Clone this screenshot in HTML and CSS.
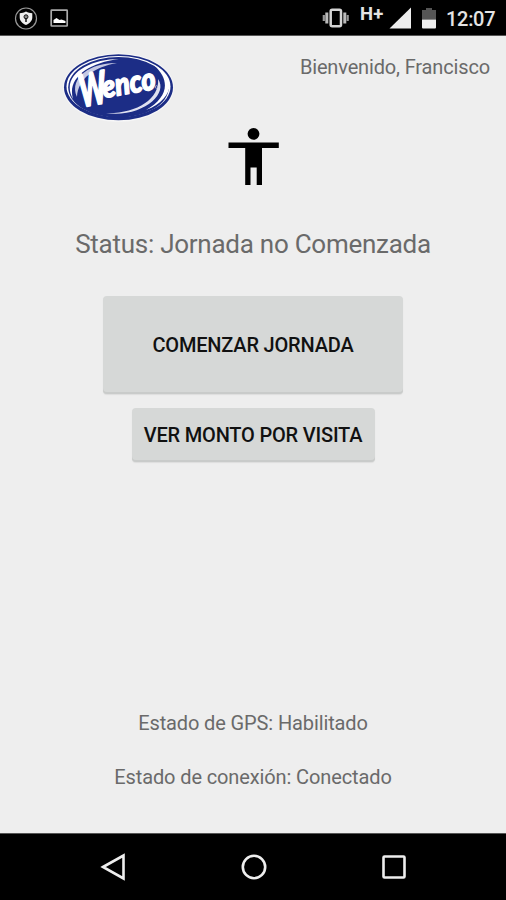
FILE: index.html
```html
<!DOCTYPE html>
<html lang="es">
<head>
<meta charset="utf-8">
<title>Jornada</title>
<link rel="stylesheet" href="styles.css">
</head>
<body>
<div class="screen">
  <header class="statusbar">
    <svg class="notifications" width="76" height="36" viewBox="0 0 76 36">
      <circle cx="26" cy="18.500" r="10.500" fill="none" stroke="#999" stroke-width="1.200"/>
      <path d="M26 11.500c2 1.200 4 1.700 6.300 1.700v4.300c0 3.700-3 6-6.300 7.500-3.300-1.500-6.300-3.800-6.300-7.500v-4.300c2.300 0 4.300-.5 6.300-1.700z" fill="#eee"/>
      <circle cx="26" cy="16.800" r="2" fill="#888" stroke="#111"/>
      <path d="M26 18v4" stroke="#111" stroke-width="1.500"/>
      <rect x="51.200" y="10.200" width="16" height="15.800" rx=".5" fill="none" stroke="#aaa" stroke-width="1.700"/>
      <path d="M53.500 23v-3l3-2 3 2 2-.5 4 1.500v2z" fill="#fff"/>
    </svg>
    <div class="indicators">
      <svg width="28" height="36" viewBox="322 0 28 36">
        <rect x="330.700" y="9.700" width="10.300" height="16.600" rx="1.500" fill="none" stroke="#d5d5d5" stroke-width="2.500"/>
        <path d="M326.800 12.500v11M344.800 12.500v11" stroke="#bbb" stroke-width="3"/>
        <path d="M323.800 15v6M347.700 15v6" stroke="#999" stroke-width="2.200"/>
      </svg>
      <span class="network">H+</span>
      <svg width="55" height="36" viewBox="385 0 55 36">
        <path d="M411 7.500V28.500H389.500z" fill="#eee"/>
        <path d="M422 10h4V8h6v2h4v9.500h-14z" fill="#555"/>
        <path d="M422 19.500h14v8q0 1-1 1h-12q-1 0-1-1z" fill="#eee"/>
      </svg>
      <time class="clock">12:07</time>
    </div>
  </header>
  <main class="content">
    <div class="heading">
      <svg class="logo" width="112" height="70" viewBox="62 52 112 70">
        <ellipse cx="118.500" cy="87.500" rx="55.500" ry="34.300" fill="#f7f7f8"/>
        <ellipse cx="118.500" cy="87.300" rx="54.500" ry="33" fill="#1c2d86"/>
        <ellipse cx="118.500" cy="86.500" rx="52" ry="30.500" fill="#fff"/>
        <ellipse cx="118.500" cy="87.300" rx="50.300" ry="30.300" fill="#1c2d86"/>
        <path d="M73 99C60 76 88 59 119 59C88 63 67 78 73 99z" fill="#fff"/>
        <path d="M154 65C177 77 174 99 146 110C168 97 171 81 154 65z" fill="#fff"/>
        <path d="M77 97C68 76 94 62 117 63C95 67 78 78 77 97z" fill="#c5c9e3"/>
        <path d="M158 79C169 94 142 118 106 113C136 114 160 99 158 79z" fill="#dfe1f0"/>
        <g transform="translate(82 107) rotate(-10)" class="brand">
          <text class="initial" x="0" y="0" textLength="27" lengthAdjust="spacingAndGlyphs">W</text>
          <text class="rest" x="23" y="-5" textLength="54" lengthAdjust="spacingAndGlyphs">enco</text>
        </g>
        <circle cx="156.500" cy="87" r="1.300" fill="none" stroke="#b9bfdc" stroke-width=".8"/>
      </svg>
      <p class="welcome">Bienvenido, Francisco</p>
    </div>
    <svg class="person" width="52" height="60" viewBox="227 127 52 60">
      <circle cx="253.500" cy="133.800" r="5.900"/>
      <path d="M228.500 142.500h50.300v5.500H262v37h-5.300v-17.500h-6.200V185h-5.300v-37h-16.700z"/>
    </svg>
    <h1 class="status">Status: Jornada no Comenzada</h1>
    <button class="button primary">COMENZAR JORNADA</button>
    <button class="button secondary">VER MONTO POR VISITA</button>
    <div class="states">
      <p class="gps">Estado de GPS: Habilitado</p>
      <p class="connection">Estado de conexión: Conectado</p>
    </div>
  </main>
  <nav class="navbar">
    <svg width="28" height="28" viewBox="0 0 28 28"><path d="M3 14 23.500 2.500v23z"/></svg>
    <svg width="28" height="28" viewBox="0 0 28 28"><circle cx="14" cy="14" r="11.200"/></svg>
    <svg width="28" height="28" viewBox="0 0 28 28"><rect x="3.500" y="3.500" width="21" height="21" rx="1"/></svg>
  </nav>
</div>
</body>
</html>
```

FILE: styles.css
```css
* { box-sizing: border-box; }
body { margin: 0; font-family: Roboto, sans-serif; background: #eee; }
p, h1 { margin: 0; font-weight: 400; white-space: nowrap; }
svg { display: block; flex: none; }
.screen { width: 506px; height: 900px; display: flex; flex-direction: column; color: #6a6a6a; }
.statusbar { height: 36px; background: #000; color: #e4e4e4; display: flex; justify-content: space-between; border-bottom: 1px solid #555; }
.indicators { display: flex; width: 184px; }
.network { width: 35px; padding-left: 10px; font-size: 18.5px; font-weight: 700; line-height: 28px; letter-spacing: 0.3px; }
.clock { padding-left: 6px; font-size: 20px; font-weight: 500; line-height: 38px; letter-spacing: -0.3px; }
.content { flex: 1; display: flex; flex-direction: column; align-items: center; }
.heading { width: 100%; height: 91px; padding: 16px 16px 0 62px; display: flex; justify-content: space-between; }
.brand { fill: #fff; stroke: #fff; font-family: Lato, sans-serif; font-style: italic; font-weight: 900; }
.initial { font-size: 45px; stroke-width: 2px; stroke-linejoin: round; }
.rest { font-size: 31px; stroke-width: 1.5px; stroke-linejoin: round; }
.welcome { font-size: 20px; line-height: 30px; letter-spacing: -0.15px; }
.status { margin-top: 39px; font-size: 26px; line-height: 36px; letter-spacing: -0.26px; }
.button { border: 0; border-radius: 4px; padding: 0; background: #d6d8d7; color: #111; font: 500 20px Roboto, sans-serif; letter-spacing: -0.19px; box-shadow: inset 0 -2px #c9cbca, 0 1px 1px #ddd; white-space: nowrap; }
.primary { margin-top: 34px; width: 300px; height: 98px; }
.secondary { margin-top: 14px; width: 243px; height: 54px; }
.states { margin-top: auto; padding-bottom: 41px; display: flex; flex-direction: column; align-items: center; gap: 24px; font-size: 20px; line-height: 30px; letter-spacing: -0.12px; }
.navbar { height: 67px; background: #000; border-top: 1px solid #555; display: flex; justify-content: space-between; align-items: center; padding: 0 98px 0 100px; }
.navbar svg { fill: none; stroke: #eee; stroke-width: 2.6px; }
```
